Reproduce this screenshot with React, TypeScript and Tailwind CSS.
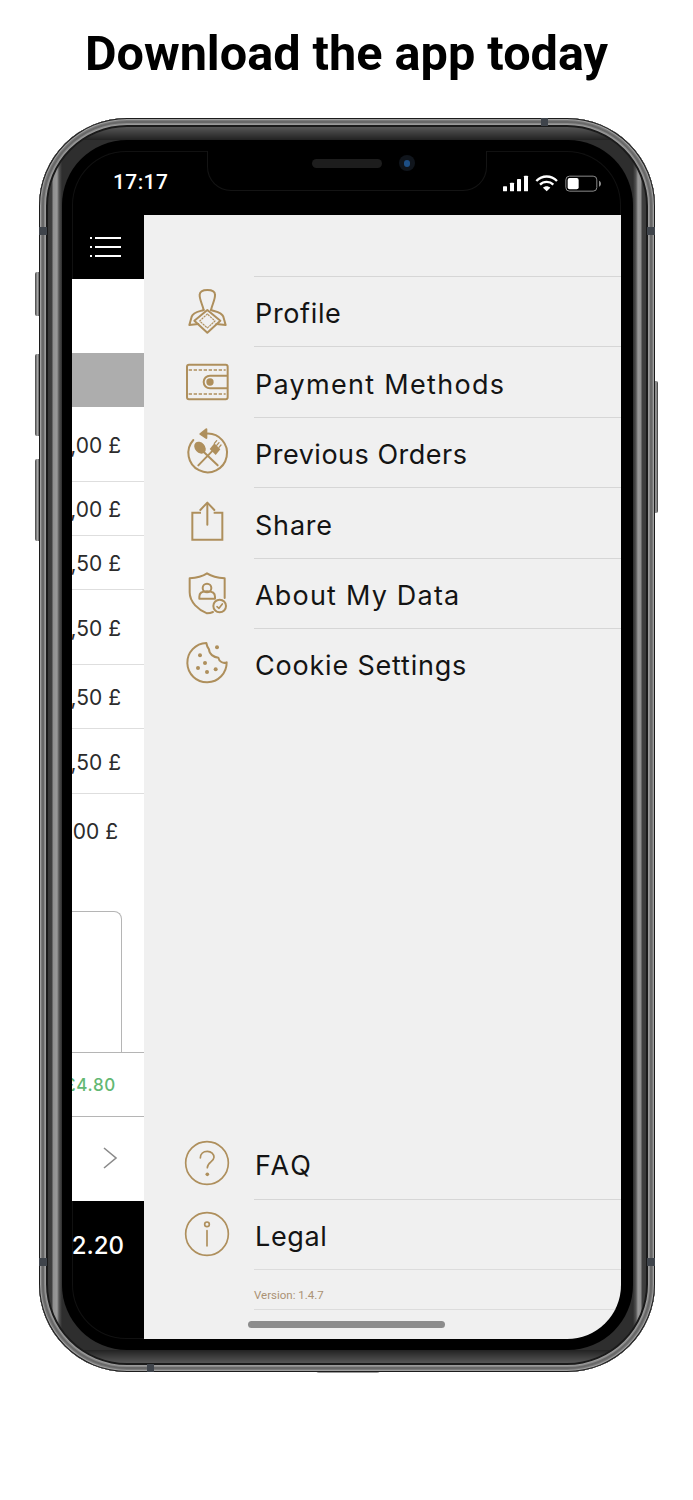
const gold = "#ae8f5c";

const Divider = "border-t border-[#d6d6d6]";

const prices = [
	{ text: "1,00 £", h: "h-[75px]" },
	{ text: "1,00 £", h: "h-[54px]" },
	{ text: "5,50 £", h: "h-[54px]" },
	{ text: "5,50 £", h: "h-[75px]" },
	{ text: "9,50 £", h: "h-[64px]" },
	{ text: "1,50 £", h: "h-[65px]" },
];

const IconBox = ({ view, children }: { view: string; children: React.ReactNode }) => (
	<svg
		viewBox={view}
		width="48"
		height="48"
		fill="none"
		stroke={gold}
		strokeWidth="6"
		strokeLinecap="round"
		strokeLinejoin="round"
		className="ml-[39px] shrink-0"
	>
		{children}
	</svg>
);

const ProfileIcon = () => (
	<IconBox view="38 21 144 144">
		<path d="M100 90C96 72 87 58 88 44C89 32 100 30 111 30C122 30 134 32 134 44C135 58 126 72 122 90" />
		<path d="M100 90C85 95 68 97 64 110L57 135L84 132" />
		<path d="M122 90C137 95 155 97 159 110L166 135L138 132" />
		<path d="M111 90L72 122L111 158L150 122Z" />
		<path d="M111 102L88 123L111 144L134 123Z" strokeWidth="3.5" strokeDasharray="4 5" />
	</IconBox>
);

const WalletIcon = () => (
	<IconBox view="38 232 144 144">
		<rect x="50" y="252" width="122" height="104" rx="6" />
		<path d="M55 268H166M55 340H166" strokeWidth="4" strokeDasharray="10 5" strokeLinecap="butt" />
		<path d="M170 285H119a19 19 0 0 0 0 38H170" />
		<circle cx="119" cy="304" r="11" fill={gold} stroke="none" />
	</IconBox>
);

const OrdersIcon = () => (
	<IconBox view="38 444 144 144">
		<path d="M108 461A58 58 0 1 1 69 480" />
		<path d="M108 448L90 462L108 474Z" fill={gold} />
		<path d="M98 514L142 556M127 512L84 556" />
		<ellipse cx="89" cy="503" rx="15" ry="20" transform="rotate(-42 89 503)" fill={gold} stroke="none" />
		<path d="M118 507L136 525L150 508L132 490Z" fill={gold} stroke="none" />
		<path d="M132 490L139 482M139 496L146 488M146 502L152 495" strokeWidth="4" />
	</IconBox>
);

const ShareIcon = () => (
	<IconBox view="38 24 144 144">
		<path d="M92 68H66V149H156V68H130" strokeLinecap="butt" strokeLinejoin="miter" />
		<path d="M111 42V104" />
		<path d="M90 60L111 38L132 60" />
	</IconBox>
);

const ShieldIcon = () => (
	<IconBox view="38 235 144 144">
		<path d="M128 364C122 367 116 368 110 368C85 358 58 335 58 305V263C75 262 95 258 110 248C125 258 146 262 163 263V322" />
		<circle cx="110" cy="292" r="13" />
		<path d="M87 324V318C87 306 97 302 110 302C123 302 134 306 134 318V324Z" />
		<circle cx="148" cy="346" r="19" fill="#f0f0f0" />
		<path d="M140 348L146 353L156 340" strokeWidth="5" />
	</IconBox>
);

const CookieIcon = () => (
	<IconBox view="38 447 144 144">
		<path d="M108 459A59 59 0 1 0 169 517C158 522 146 514 144 503C130 502 116 492 116 478C112 472 109 466 108 459Z" />
		<g fill={gold} stroke="none">
			<circle cx="89" cy="496" r="6" />
			<circle cx="104" cy="519" r="6" />
			<circle cx="83" cy="534" r="6" />
			<circle cx="110" cy="546" r="6" />
			<circle cx="136" cy="538" r="6" />
			<circle cx="140" cy="472" r="6" />
		</g>
	</IconBox>
);

const FaqIcon = () => (
	<IconBox view="0 0 144 144">
		<circle cx="72" cy="72" r="64" strokeWidth="5" />
		<path d="M52 57C52 44 61 37 73 37C85 37 93 45 93 55C93 68 73 70 73 86" strokeWidth="5" />
		<circle cx="73" cy="106" r="5.5" fill={gold} stroke="none" />
	</IconBox>
);

const LegalIcon = () => (
	<IconBox view="0 0 144 144">
		<circle cx="72" cy="72" r="64" strokeWidth="5" />
		<circle cx="72" cy="43" r="7" strokeWidth="5" />
		<path d="M72 62V108" strokeWidth="5" />
	</IconBox>
);

const StatusIcons = () => (
	<svg viewBox="455 225 300 55" width="100" height="18.33" className="shrink-0">
		<rect x="458" y="262" width="12" height="15" rx="2" fill="#fff" />
		<rect x="479" y="251" width="12" height="26" rx="2" fill="#fff" />
		<rect x="500" y="240" width="12" height="37" rx="2" fill="#fff" />
		<rect x="521" y="230" width="12" height="47" rx="2" fill="#fff" />
		<g fill="none" stroke="#fff" strokeWidth="7">
			<path d="M558 246C576 228 602 228 620 246" />
			<path d="M569 257C580 246 598 246 609 257" />
		</g>
		<path d="M578 266C584 260 594 260 600 266L589 277Z" fill="#fff" />
		<rect x="646.5" y="231.5" width="93" height="45" rx="11" fill="none" stroke="#8c8c8c" strokeWidth="3" />
		<rect x="652" y="237" width="33" height="34" rx="6" fill="#fff" />
		<path d="M746 245C750 247 752 250 752 254C752 258 750 261 746 263Z" fill="#8c8c8c" />
	</svg>
);

const Row = ({
	icon,
	label,
	track,
	first,
}: {
	icon: React.ReactNode;
	label: string;
	track: string;
	first?: boolean;
}) => (
	<div className="flex h-[70.4px] items-center">
		{icon}
		<div
			className={`ml-[23px] flex h-full flex-1 items-center pt-[6px] pl-[1px] text-[27px] text-[#141414] ${track} ${first === false ? "" : Divider}`}
		>
			{label}
		</div>
	</div>
);

const Price = ({ text, h }: { text: string; h: string }) => (
	<div
		className={`flex items-center justify-end overflow-hidden whitespace-nowrap border-b border-[#dedede] pt-[3px] pr-[23px] text-[21px] text-[#2b2b2b] ${h}`}
	>
		{text}
	</div>
);

const LeftColumn = () => (
	<div className="flex w-[72px] shrink-0 flex-col">
		<div className="flex h-[64px] flex-col gap-[7px] pt-[22px] pl-[18px]">
			{[0, 1, 2].map((i) => (
				<div key={i} className="flex h-[2px] items-center gap-[3px]">
					<div className="h-[2px] w-[2px] bg-white" />
					<div className="h-[2px] w-[26px] bg-white" />
				</div>
			))}
		</div>
		<div className="h-[74px] bg-white" />
		<div className="h-[54px] bg-[#adadad]" />
		<div className="bg-white">
			{prices.map((p, i) => (
				<Price key={i} text={p.text} h={p.h} />
			))}
			<div className="flex h-[117px] items-start justify-end overflow-hidden whitespace-nowrap pt-[22px] pr-[26px] text-[21px] text-[#2b2b2b]">
				1,00 £
			</div>
			<div className="h-[141px] pr-[22px]">
				<div className="h-full rounded-tr-[8px] border-t border-r border-[#b5b5b5]" />
			</div>
			<div className="flex h-[65px] items-center justify-end overflow-hidden whitespace-nowrap border-y border-[#b5b5b5] pt-[2px] pr-[28px] text-[17px] font-medium tracking-[0.7px] text-[#62b873]">
				£4.80
			</div>
			<div className="flex h-[84px] items-center justify-end pr-[26px] pb-[2px]">
				<svg viewBox="0 0 16 24" width="16" height="24" fill="none" stroke="#8a8a8a" strokeWidth="1.6">
					<path d="M2 2L14 12L2 22" />
				</svg>
			</div>
		</div>
		<div className="flex flex-1 justify-end overflow-hidden whitespace-nowrap pt-[30px] pr-[20px] text-[24px] font-medium leading-[30px] text-white">
			2.20
		</div>
	</div>
);

const Drawer = () => (
	<div className="flex flex-1 flex-col bg-[#f0f0f0] pt-[61px]">
		<Row icon={<ProfileIcon />} label="Profile" track="tracking-[0.65px]" />
		<Row icon={<WalletIcon />} label="Payment Methods" track="tracking-[1.3px]" />
		<Row icon={<OrdersIcon />} label="Previous Orders" track="tracking-[0.5px]" />
		<Row icon={<ShareIcon />} label="Share" track="tracking-[0.8px]" />
		<Row icon={<ShieldIcon />} label="About My Data" track="tracking-[1.2px]" />
		<Row icon={<CookieIcon />} label="Cookie Settings" track="tracking-[0.8px]" />
		<div className="mt-auto">
			<Row icon={<FaqIcon />} label="FAQ" track="tracking-[2px]" first={false} />
			<Row icon={<LegalIcon />} label="Legal" track="tracking-[0.65px]" />
			<div className="ml-[110px] flex h-[41px] items-center border-y border-[#dcdcdc] pt-[13px] text-[11.5px] text-[#ab9274] font-['Roboto',sans-serif]">
				Version: 1.4.7
			</div>
			<div className="h-[29px]" />
		</div>
	</div>
);

const HardwareButton = ({ className }: { className: string }) => (
	<div className={`absolute bg-[linear-gradient(90deg,#444,#a5a5a5_50%,#333)] ${className}`} />
);

const Band = ({ className }: { className: string }) => (
	<div className={`absolute bg-[#3f444b] ${className}`} />
);

const Phone = () => (
	<div className="relative ml-[39px] h-[1254px] w-[616px]">
		<HardwareButton className="top-[154px] -left-[4px] h-[44px] w-[5px] rounded-l-[2px]" />
		<HardwareButton className="top-[236px] -left-[4px] h-[82px] w-[5px] rounded-l-[2px]" />
		<HardwareButton className="top-[341px] -left-[4px] h-[82px] w-[5px] rounded-l-[2px]" />
		<HardwareButton className="top-[263px] -right-[3px] h-[132px] w-[4px] rounded-r-[2px]" />
		<div className="absolute -bottom-[1px] left-[277px] h-[3px] w-[64px] rounded-b-[3px] bg-[#9a9a9a]" />
		<div className="relative h-full rounded-[88px] bg-[#222] p-[9px] shadow-[inset_0_0_0_1px_#1c1c1c,inset_0_0_0_2px_#a0a0a0,inset_0_0_0_3px_#7a7a7a,inset_0_0_0_5px_#686868,inset_0_0_0_6px_#8a8a8a,inset_0_0_0_7px_#9a9a9a,inset_0_0_0_9px_#1a1a1a]">
			<div className="h-full rounded-[79px] bg-[linear-gradient(180deg,#565656_0,#222_13px,transparent_13px,transparent_calc(100%-13px),#222_calc(100%-13px),#565656_100%),linear-gradient(90deg,#3a3a3a_0,#404040_4px,#8e8e8e_5px,#999_9px,#555_11px,#2e2e2e_14px,#2e2e2e_calc(100%-13px),#555_calc(100%-10px),#999_calc(100%-8px),#8e8e8e_calc(100%-5px),#404040_calc(100%-4px),#3a3a3a_100%)] pt-[13px] pr-[13px] pb-[13px] pl-[14px]">
				<div className="h-full rounded-[65px] bg-black pt-[11px] pr-[12px] pb-[11px] pl-[10px]">
					<div className="relative flex h-full flex-col overflow-hidden rounded-[54px] shadow-[inset_0_0_0_1px_#111]">
						<div className="flex h-[64px] shrink-0 items-center justify-between pr-[19px] pl-[41px] text-[21px] font-medium tracking-[0.4px] text-white font-['Roboto',sans-serif]">
							<span>17:17</span>
							<StatusIcons />
						</div>
						<div className="flex flex-1">
							<LeftColumn />
							<Drawer />
						</div>
						{/* notch */}
						<div className="absolute -top-[1px] left-[135px] h-[41px] w-[280px] rounded-b-[24px] border-x border-b border-[#141414] bg-black" />
						<div className="absolute top-[8px] left-[240px] h-[9px] w-[70px] rounded-full bg-[#1d1d1d]" />
						<div className="absolute top-[4px] left-[327px] flex h-[16px] w-[16px] items-center justify-center rounded-full bg-[#10151c]">
							<div className="h-[7px] w-[6px] rounded-full bg-[#1d4f86]" />
						</div>
						<div className="absolute bottom-[11px] left-[176px] h-[7px] w-[197px] rounded-full bg-[#8c8c8c]" />
					</div>
				</div>
			</div>
		</div>
		<Band className="top-0 left-[502px] h-[8px] w-[7px]" />
		<Band className="bottom-0 left-[108px] h-[8px] w-[7px]" />
		<Band className="top-[109px] left-0 h-[8px] w-[8px]" />
		<Band className="top-[109px] right-0 h-[8px] w-[8px]" />
		<Band className="top-[1140px] left-0 h-[8px] w-[8px]" />
		<Band className="top-[1140px] right-0 h-[8px] w-[8px]" />
	</div>
);

export default function App() {
	return (
		<div className="h-[1500px] w-[693px] overflow-hidden bg-white font-['Inter',sans-serif]">
			<h1 className="mb-[10px] flex h-[108px] items-center justify-center text-[48.6px] font-bold text-black font-['Roboto',sans-serif]">
				Download the app today
			</h1>
			<Phone />
		</div>
	);
}
